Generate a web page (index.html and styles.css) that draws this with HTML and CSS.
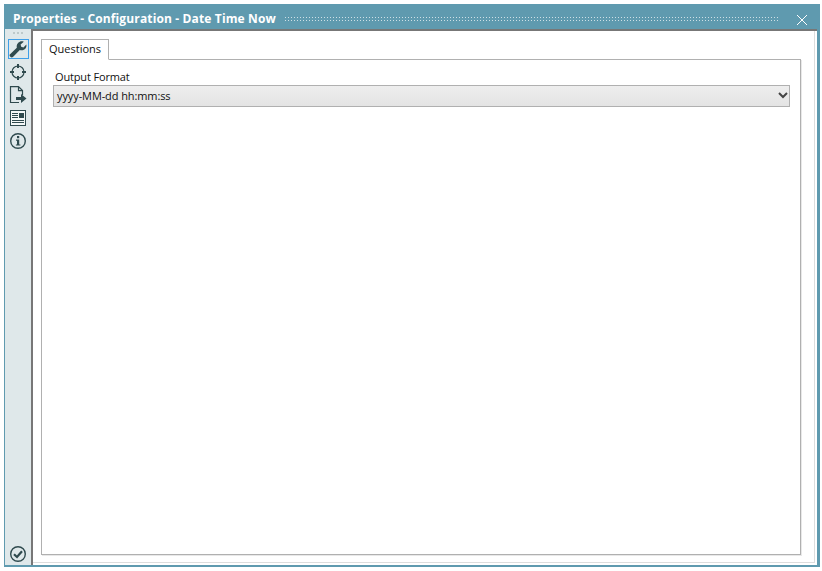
FILE: index.html
```html
<!DOCTYPE html>
<html lang="en">
<head>
<meta charset="utf-8">
<title>Properties</title>
<link rel="stylesheet" href="styles.css">
</head>
<body>
<div class="window">
  <header class="titlebar">
    <span class="title">Properties - Configuration - Date Time Now</span>
    <span class="grip"></span>
    <svg class="close" width="12" height="12" viewBox="0 0 12 12"><path d="M1 1L11 11M11 1L1 11" stroke="#fff" stroke-width="1" fill="none"/></svg>
  </header>
  <div class="body">
    <nav class="rail">
      <div class="rail-dots"></div>
      <button class="rail-btn active">
        <svg width="18" height="18" viewBox="0 0 18 18"><path d="M.8 14.6L7.8 7.8C7.2 5.2 8.4 2.8 10.8 1.7C12.2 1.1 13.6 1.2 14.8 1.7L11.6 4.5L12.2 6.8L14.4 7.4L17.4 4.4C17.8 6.6 16.8 8.8 14.8 9.8C13.4 10.5 12 10.4 10.8 10L4.2 16.8C3.2 17.7 2.2 17.6 1.4 16.8C.6 16 .2 15.4 .8 14.6Z" fill="#2f4a4e"/></svg>
      </button>
      <button class="rail-btn">
        <svg width="18" height="18" viewBox="0 0 18 18" fill="none" stroke="#2f4a4e"><circle cx="9" cy="9" r="6" stroke-width="1.2"/><path d="M9 1V5M9 13V17M1 9H5M13 9H17" stroke-width="2"/></svg>
      </button>
      <button class="rail-btn">
        <svg width="18" height="18" viewBox="0 0 18 18"><path d="M10 16.5H1.5V.6H9.5L13.5 4.6V9M9.5 .6V4.6H13.5" fill="none" stroke="#2f4a4e" stroke-width="1.2"/><path d="M7 11H12V8L17.5 12.5L12 17V14H7Z" fill="#2f4a4e"/></svg>
      </button>
      <button class="rail-btn">
        <svg width="18" height="18" viewBox="0 0 18 18"><rect x="1.5" y="1.5" width="15" height="15" fill="#f4f8f8" stroke="#2f4a4e"/><rect x="10" y="4" width="5" height="5" fill="#2f4a4e"/><path d="M3 4.5H9M3 6.5H9M3 8.5H9M3 11.5H15M3 13.5H15" stroke="#2f4a4e" stroke-width="1"/></svg>
      </button>
      <button class="rail-btn">
        <svg width="18" height="18" viewBox="0 0 18 18"><circle cx="9" cy="9" r="7.3" fill="none" stroke="#2f4a4e" stroke-width="1.4"/><rect x="8" y="4" width="2.2" height="2.2" fill="#2f4a4e"/><path d="M7 7.6H10.2V12.4H11.4V13.6H6.9V12.4H8V8.8H7Z" fill="#2f4a4e"/></svg>
      </button>
      <div class="rail-spacer"></div>
      <svg class="status" width="18" height="18" viewBox="0 0 18 18" fill="none" stroke="#2f4a4e"><circle cx="9" cy="9" r="7.3" stroke-width="1.4"/><path d="M5 9.2L8 12L13 6.2" stroke-width="2.2"/></svg>
    </nav>
    <main class="content">
      <div class="tabs"><div class="tab">Questions</div></div>
      <section class="panel">
        <label class="field-label" for="fmt">Output Format</label>
        <div class="select">
          <span id="fmt">yyyy-MM-dd hh:mm:ss</span>
          <svg width="10" height="7" viewBox="0 0 10 7"><path d="M1 1L5 5L9 1" fill="none" stroke="#444" stroke-width="2"/></svg>
        </div>
      </section>
    </main>
  </div>
</div>
</body>
</html>
```
FILE: styles.css
```css
* { box-sizing: border-box; }
html, body { margin: 0; height: 100%; background: #fff; }
body { padding: 4px 2px 4px 4px; font-family: "Open Sans", "Noto Sans", sans-serif; overflow: hidden; }
.window { height: 563px; width: 816px; display: flex; flex-direction: column; background: #5f9aaf; padding: 0 3px 2px 1px; }
.titlebar { height: 25px; flex: none; display: flex; align-items: center; padding: 3px 9px 0 8px; color: #fff; }
.title { font-size: 12px; font-weight: 700; white-space: nowrap; letter-spacing: 0.14px; }
.grip { width: 495px; height: 5px; margin-left: 8px; flex: none; background-image: radial-gradient(circle, #cfe0e6 0.6px, transparent 0.8px); background-size: 3px 3px; }
.close { margin-left: auto; margin-right: 0; margin-top: 3px; }
.body { flex: 1; display: flex; min-height: 0; }
.rail { width: 26px; flex: none; background: #dfe8ea; display: flex; flex-direction: column; align-items: center; padding: 0 0 2px; }
.rail-dots { width: 12px; height: 2px; margin: 3px 0 5px; background-image: radial-gradient(circle, #9aa, 0.7px, transparent 1px); background-size: 4px 2px; }
.rail-btn { width: 21px; height: 20px; margin: 0 0 3px 1px; padding: 0 1px 0 0; border: 1px solid transparent; background: none; display: flex; align-items: center; justify-content: center; }
.rail-btn.active { border-color: #3f9fe8; }
.rail-spacer { flex: 1; }
.content { flex: 1; background: #fff; border-left: 2px solid #777; border-top: 2px solid #777; padding: 8px 16px 10px 8px; display: flex; flex-direction: column; box-shadow: inset -2px -2px 0 #fff, inset -3px -3px 0 #ddd; }
.tabs { display: flex; height: 21px; flex: none; margin-bottom: -1px; position: relative; z-index: 1; }
.tab { width: 68px; height: 21px; border: 1px solid #b0b0b0; border-bottom-color: #fff; background: #fff; font-size: 11px; color: #111; text-align: center; line-height: 17px; }
.panel { flex: 1; border: 1px solid #b0b0b0; box-shadow: 1px 1px 0 #e8e8e8; padding: 9px 10px 0 11px; }
.field-label { display: block; font-size: 11px; line-height: 15px; color: #111; margin: 0 0 1px 2px; letter-spacing: -0.15px; }
.select { height: 22px; border: 1px solid #b0b0b0; background: linear-gradient(#eeeeee, #e4e4e4); display: flex; align-items: center; justify-content: space-between; padding: 0 1px 2px 3px; font-size: 11px; color: #111; letter-spacing: -0.1px; }
```
